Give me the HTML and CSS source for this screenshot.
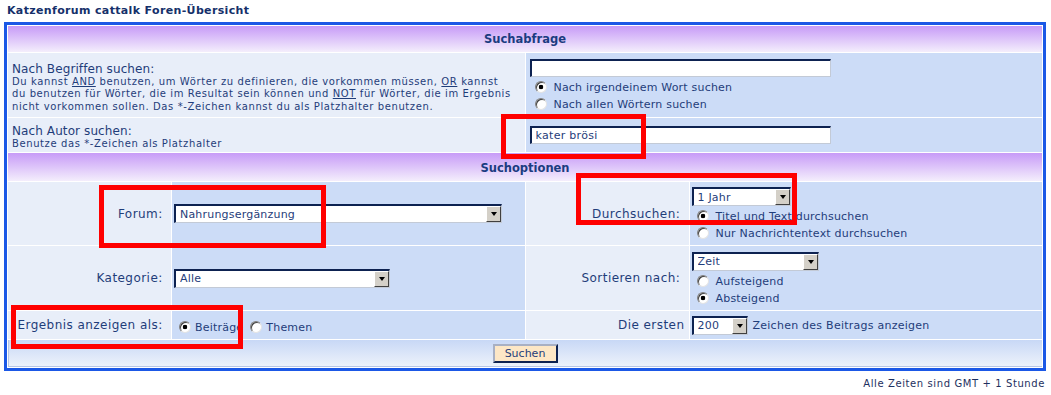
FILE: index.html
```html
<!DOCTYPE html>
<html lang="de">
<head>
    <meta charset="UTF-8">
    <meta name="viewport" content="width=device-width, initial-scale=1.0">
    <title>Katzenforum cattalk :: Suche</title>
    <link rel="stylesheet" href="styles.css">
</head>

<body>
<div class="page">
    <div class="nav">Katzenforum cattalk Foren-Übersicht</div>

    <form class="forumline" action="#">
        <div class="cat-head">Suchabfrage</div>

        <div class="cell row1 wide text-cell">
            <span class="gen">Nach Begriffen suchen:</span>
            <span class="gensmall help">Du kannst <u>AND</u> benutzen, um Wörter zu definieren, die vorkommen müssen, <u>OR</u> kannst<br>du benutzen für Wörter, die im Resultat sein können und <u>NOT</u> für Wörter, die im Ergebnis<br>nicht vorkommen sollen. Das *-Zeichen kannst du als Platzhalter benutzen.</span>
        </div>
        <div class="cell row2 wide">
            <input type="text" class="post" name="search_keywords">
            <label class="opt"><input type="radio" name="search_terms" checked><span>Nach irgendeinem Wort suchen</span></label>
            <label class="opt"><input type="radio" name="search_terms"><span>Nach allen Wörtern suchen</span></label>
        </div>

        <div class="cell row1 wide text-cell">
            <span class="gen">Nach Autor suchen:</span>
            <span class="gensmall">Benutze das *-Zeichen als Platzhalter</span>
        </div>
        <div class="cell row2 wide">
            <input type="text" class="post" name="search_author" value="kater brösi">
        </div>

        <div class="cat-head head-options">Suchoptionen</div>

        <div class="label row1">Forum:&nbsp;</div>
        <div class="cell row2 opts">
            <span class="sel"><select class="w-forum"><option>Nahrungsergänzung</option></select></span>
        </div>
        <div class="label row1">Durchsuchen:&nbsp;</div>
        <div class="cell row2 opts">
            <span class="sel"><select class="w-time"><option>1 Jahr</option></select></span>
            <label class="opt"><input type="radio" name="search_fields" checked><span>Titel und Text durchsuchen</span></label>
            <label class="opt"><input type="radio" name="search_fields"><span>Nur Nachrichtentext durchsuchen</span></label>
        </div>

        <div class="label row1">Kategorie:&nbsp;</div>
        <div class="cell row2 opts">
            <span class="sel"><select class="w-cat"><option>Alle</option></select></span>
        </div>
        <div class="label row1">Sortieren nach:&nbsp;</div>
        <div class="cell row2 opts">
            <span class="sel"><select class="w-sort"><option>Zeit</option></select></span>
            <label class="opt"><input type="radio" name="sort_dir"><span>Aufsteigend</span></label>
            <label class="opt"><input type="radio" name="sort_dir" checked><span>Absteigend</span></label>
        </div>

        <div class="label row1">Ergebnis anzeigen als:&nbsp;</div>
        <div class="cell row2 opts">
            <div class="opt tight">
                <input type="radio" name="show_results" checked><span>Beiträge</span>
                <input type="radio" name="show_results"><span>Themen</span>
            </div>
        </div>
        <div class="label row1">Die ersten</div>
        <div class="cell row2 opts inline">
            <span class="sel"><select class="w-chars"><option>200</option></select></span>
            <span class="genmed">Zeichen des Beitrags anzeigen</span>
        </div>

        <div class="cat-bottom">
            <button type="button" class="liteoption">Suchen</button>
        </div>
    </form>

    <div class="note">Alle Zeiten sind GMT + 1 Stunde</div>

    <!-- red markers from the screenshot -->
    <div class="mark mark-author"></div>
    <div class="mark mark-forum"></div>
    <div class="mark mark-search"></div>
    <div class="mark mark-result"></div>
</div>
</body>
</html>
```

FILE: styles.css
```css
body {
    margin: 0;
    font-family: "DejaVu Sans", Verdana, sans-serif;
    color: #1f3d7a;
    background-color: #fff;
}

.page {
    position: relative;
    padding: 4px 5px 0 4px;
}

.nav {
    font-size: 11px;
    font-weight: bold;
    line-height: 14px;
    letter-spacing: 0.35px;
    margin: 0 0 4px 3px;
    color: #15306a;
}

.forumline {
    width: 1042px;
    box-sizing: border-box;
    margin: 0;
    border: 3px solid #1b58e6;
    padding: 1px;
    background-color: #fff;
    display: grid;
    grid-template-columns: 163px 1fr 163px 1fr;
    grid-template-rows: 26px 64px 34px 28px 63px 64px 28px 27px;
    gap: 1px;
}

.cat-head {
    grid-column: 1 / -1;
    display: flex;
    align-items: center;
    justify-content: center;
    background: linear-gradient(#c79bf7, #f4eefc);
    font-size: 11.5px;
    font-weight: bold;
    color: #1b3c80;
}

.head-options {
    padding-top: 2px;
}

.row1 {
    background-color: #e8eef9;
}

.row2 {
    background-color: #ccdcf7;
}

.wide {
    grid-column: span 2;
}

.cell {
    display: flex;
    flex-direction: column;
    justify-content: center;
    align-items: flex-start;
    padding: 0 4px;
}

.text-cell {
    padding-top: 5px;
}

.opts {
    padding: 0 2px;
}

.inline {
    flex-direction: row;
    align-items: center;
    justify-content: flex-start;
}

.label {
    display: flex;
    align-items: center;
    justify-content: flex-end;
    padding-right: 4px;
    font-size: 12px;
    letter-spacing: 0.45px;
    white-space: nowrap;
}

.gen {
    font-size: 12px;
    line-height: 14px;
    letter-spacing: 0.1px;
}

.gensmall {
    font-size: 10px;
    line-height: 12.5px;
    letter-spacing: 0.6px;
}

.help {
    white-space: nowrap;
}

.genmed {
    font-size: 11px;
    letter-spacing: 0.25px;
    margin-left: 5px;
}

/* text field */
input.post {
    width: 301px;
    height: 18px;
    box-sizing: border-box;
    margin: 0;
    padding: 0 4px;
    border-style: solid;
    border-width: 2px 1px 1px 2px;
    border-color: #0d2251 #c3cad6 #c3cad6 #0d2251;
    background-color: #fff;
    font-family: "DejaVu Sans", Verdana, sans-serif;
    font-size: 11px;
    letter-spacing: 0.3px;
    color: #1f3d7a;
    outline: none;
}

/* select boxes */
.sel {
    position: relative;
    display: inline-block;
    line-height: 0;
}

.sel select {
    -webkit-appearance: none;
    appearance: none;
    height: 19px;
    box-sizing: border-box;
    margin: 0;
    padding: 0 18px 0 4px;
    border-style: solid;
    border-width: 2px 1px 1px 2px;
    border-color: #0d2251 #c3cad6 #c3cad6 #0d2251;
    border-radius: 0;
    background-color: #fff;
    font-family: "DejaVu Sans", Verdana, sans-serif;
    font-size: 11px;
    letter-spacing: 0.2px;
    color: #1f3d7a;
    outline: none;
}

.sel::before {
    content: "";
    position: absolute;
    top: 2px;
    right: 1px;
    bottom: 1px;
    width: 15px;
    box-sizing: border-box;
    background-color: #d4d0c8;
    border: 1px solid;
    border-color: #fff #404040 #404040 #fff;
    pointer-events: none;
}

.sel::after {
    content: "";
    position: absolute;
    top: 8px;
    right: 5px;
    border-left: 3.5px solid transparent;
    border-right: 3.5px solid transparent;
    border-top: 4px solid #000;
    pointer-events: none;
}

.w-forum { width: 328px; }
.w-time { width: 99px; }
.w-cat { width: 216px; }
.w-sort { width: 127px; }
.w-chars { width: 56px; }

/* radio lines */
.opt {
    display: flex;
    align-items: flex-end;
    height: 17px;
    font-size: 11px;
    letter-spacing: 0.2px;
}

.opt input {
    -webkit-appearance: none;
    appearance: none;
    align-self: flex-start;
    width: 12px;
    height: 12px;
    box-sizing: border-box;
    margin: 4px 4px 0 5px;
    border: 1px solid;
    border-color: #808080 #e4e4e4 #e4e4e4 #808080;
    border-radius: 50%;
    background-color: #fff;
    box-shadow: inset 1px 1px 0 #404040;
}

.opt input:checked {
    background: radial-gradient(circle, #000 0 2px, #fff 2.6px);
}

.opt span {
    line-height: 13px;
    margin-left: 3px;
}

.tight span {
    margin-left: 0;
}

.tight span + input {
    margin-left: 7px;
}

.cat-bottom {
    grid-column: 1 / -1;
    display: flex;
    align-items: center;
    justify-content: center;
    background: linear-gradient(#c8d8f6, #eef3fb);
    box-shadow: inset 1px -1px 0 #b6c6e6;
}

.liteoption {
    width: 65px;
    height: 19px;
    box-sizing: border-box;
    padding: 0;
    border: 2px solid;
    border-color: #a8b0c4 #0d2251 #0d2251 #a8b0c4;
    background-color: #fde7c6;
    font-family: "DejaVu Sans", Verdana, sans-serif;
    font-size: 11px;
    color: #1f3d7a;
    cursor: pointer;
}

.note {
    margin-top: 7px;
    padding-right: 1px;
    text-align: right;
    font-size: 10px;
    line-height: 12px;
    letter-spacing: 0.6px;
    color: #1d3060;
}

.mark {
    position: absolute;
    box-sizing: border-box;
    border: 5px solid #f00;
    pointer-events: none;
}

.mark-author { left: 501px; top: 114px; width: 145px; height: 45px; }
.mark-forum { left: 99px; top: 185px; width: 227px; height: 63px; }
.mark-search { left: 576px; top: 173px; width: 221px; height: 52px; }
.mark-result { left: 11px; top: 305px; width: 232px; height: 44px; }
```
